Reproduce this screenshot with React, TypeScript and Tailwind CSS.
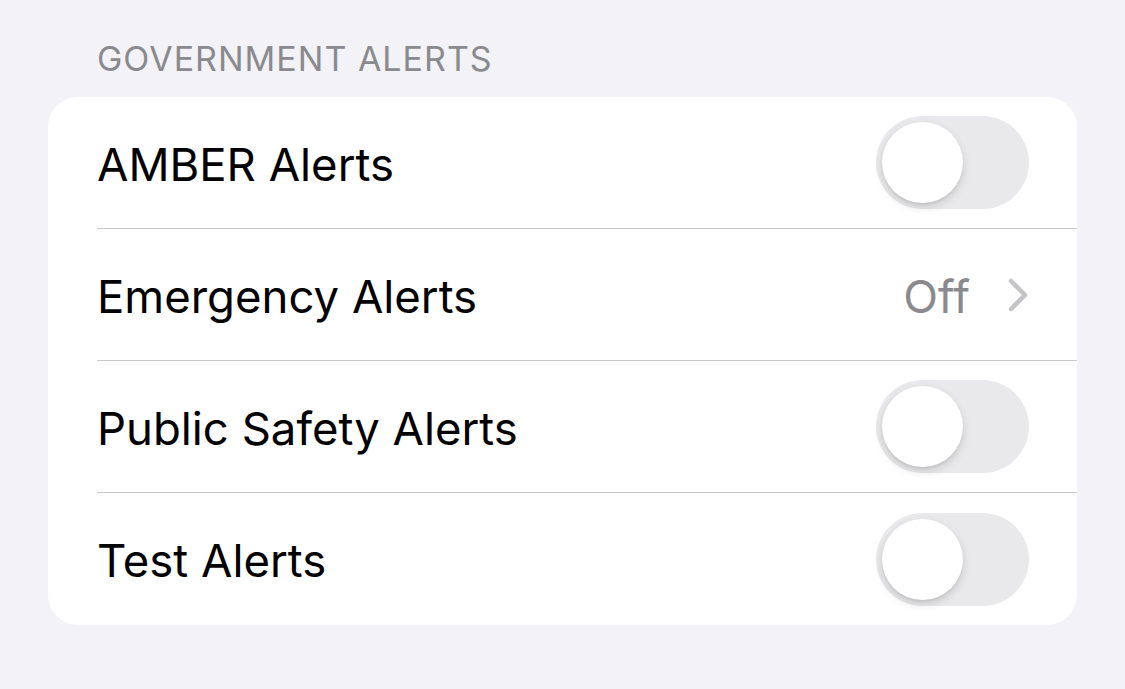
type Row = { label: string; kind: "toggle" | "link"; value?: string };

const rows: Row[] = [
  { label: "AMBER Alerts", kind: "toggle" },
  { label: "Emergency Alerts", kind: "link", value: "Off" },
  { label: "Public Safety Alerts", kind: "toggle" },
  { label: "Test Alerts", kind: "toggle" },
];

function Toggle() {
  return (
    <div className="w-[153px] h-[93px] rounded-full bg-[#e9e9eb] p-[6px] flex items-center">
      <div className="w-[81px] h-[81px] rounded-full bg-white shadow-[0_4px_10px_rgba(0,0,0,0.14),0_2px_2px_rgba(0,0,0,0.05)]" />
    </div>
  );
}

function Chevron() {
  return (
    <svg width="22" height="36" viewBox="0 0 22 36" fill="none" className="mt-[1px]">
      <path
        d="M4 4 L18 18 L4 32"
        stroke="#c4c4c7"
        strokeWidth="4.5"
        strokeLinecap="round"
        strokeLinejoin="round"
      />
    </svg>
  );
}

export default function App() {
  return (
    <div
      className="min-h-screen w-full bg-[#f2f2f7] px-[48px]"
      style={{ fontFamily: "Inter, 'Noto Sans', sans-serif" }}
    >
      <div className="pt-[42px] pb-[21px] pl-[49px] text-[34px] leading-[34px] tracking-[1px] text-[#8a8a8e]">
        GOVERNMENT ALERTS
      </div>
      <div className="bg-white rounded-[30px] overflow-hidden">
        {rows.map((row, i) => (
          <div key={row.label} className="h-[132px] pl-[49px]">
            <div
              className={
                "h-full flex items-center justify-between pr-[48px] " +
                (i < rows.length - 1 ? "border-b border-[#c8c8ca]" : "")
              }
            >
              <span className="text-[45.5px] text-black pt-[5px]">{row.label}</span>
              {row.kind === "toggle" ? (
                <Toggle />
              ) : (
                <div className="flex items-center gap-[37px]">
                  <span className="text-[45.5px] text-[#8a8a8e] pt-[5px]">{row.value}</span>
                  <Chevron />
                </div>
              )}
            </div>
          </div>
        ))}
      </div>
    </div>
  );
}
